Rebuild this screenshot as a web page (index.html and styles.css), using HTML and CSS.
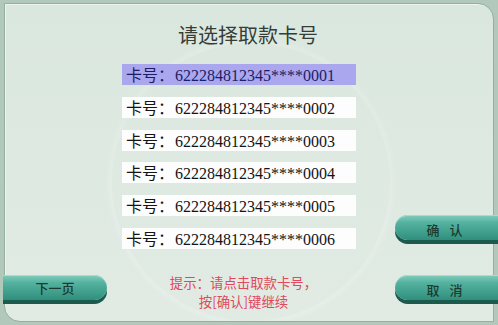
FILE: index.html
```
<!DOCTYPE html>
<html lang="zh-CN">
<head>
<meta charset="utf-8">
<title>请选择取款卡号</title>
<link rel="stylesheet" href="styles.css">
</head>
<body>
<div class="screen">
  <div class="panel">
    <h1 class="title">请选择取款卡号</h1>
    <ul class="cards">
      <li class="card selected"><span class="lbl">卡号：</span><span class="num">622284812345****0001</span></li>
      <li class="card"><span class="lbl">卡号：</span><span class="num">622284812345****0002</span></li>
      <li class="card"><span class="lbl">卡号：</span><span class="num">622284812345****0003</span></li>
      <li class="card"><span class="lbl">卡号：</span><span class="num">622284812345****0004</span></li>
      <li class="card"><span class="lbl">卡号：</span><span class="num">622284812345****0005</span></li>
      <li class="card"><span class="lbl">卡号：</span><span class="num">622284812345****0006</span></li>
    </ul>
    <div class="left-actions">
      <div class="btn btn-left"><span>下一页</span></div>
    </div>
    <p class="hint">提示：请点击取款卡号，<br>按[确认]键继续</p>
    <div class="right-actions">
      <div class="btn btn-right"><span>确</span><span>认</span></div>
      <div class="btn btn-right"><span>取</span><span>消</span></div>
    </div>
  </div>
</div>
</body>
</html>
```
FILE: styles.css
```
html, body {
  margin: 0;
  padding: 0;
}
body {
  width: 498px;
  height: 325px;
  overflow: hidden;
  background: #b2c8ba;
  font-family: "Liberation Serif", "Noto Sans CJK SC", serif;
}
.screen {
  width: 498px;
  height: 325px;
  padding-top: 3px;
  padding-left: 4px;
  box-sizing: border-box;
}
.panel {
  width: 490px;
  height: 319px;
  box-sizing: border-box;
  border: 1px solid #93b09f;
  border-radius: 0 16px 0 16px;
  background:
    radial-gradient(circle at 246px 178px, rgba(255,255,255,0) 138px, rgba(255,255,255,0.16) 140px, rgba(255,255,255,0) 146px),
    linear-gradient(#dae7de, #e1ebe4);
  box-shadow: inset 1px 1px 0 #eef5f0;
  display: grid;
  grid-template-columns: 117px 234px 1fr;
  grid-template-rows: auto auto 1fr;
}
.title {
  grid-column: 1 / 4;
  grid-row: 1;
  margin: 0;
  padding-top: 19px;
  text-align: center;
  font-family: "Noto Sans CJK SC", sans-serif;
  font-weight: 400;
  font-size: 20px;
  line-height: 24px;
  color: #353d38;
  padding-right: 2px;
}
.cards {
  grid-column: 2;
  grid-row: 2;
  list-style: none;
  margin: 17px 0 0 0;
  padding: 0;
  display: flex;
  flex-direction: column;
  gap: 11.8px;
}
.card {
  height: 21px;
  line-height: 21px;
  background: #fcfdfc;
  padding-left: 4px;
  font-size: 16px;
  color: #141414;
  white-space: nowrap;
}
.card .lbl {
  font-family: "Noto Sans CJK SC", sans-serif;
  font-size: 16px;
  margin-right: 1px;
}
.card .num {
  font-family: "Liberation Serif", serif;
}
.card.selected {
  background: #aaa7ef;
  color: #1d1d66;
}
.hint {
  grid-column: 2;
  grid-row: 3;
  margin: 24px 0 0 0;
  padding-left: 9px;
  text-align: center;
  font-family: "Noto Sans CJK SC", sans-serif;
  font-size: 13.4px;
  line-height: 19px;
  color: #e0485c;
  white-space: nowrap;
}
.left-actions {
  grid-column: 1;
  grid-row: 3;
  align-self: end;
  margin-left: -2px;
  margin-bottom: 21px;
}
.right-actions {
  grid-column: 3;
  grid-row: 2 / 4;
  align-self: end;
  justify-self: end;
  margin-right: -5px;
  margin-bottom: 21px;
  display: flex;
  flex-direction: column;
  gap: 35px;
}
.btn {
  height: 25px;
  display: flex;
  align-items: center;
  justify-content: center;
  gap: 10px;
  background: linear-gradient(#84cdbd 0%, #55b29f 30%, #3e9f8b 70%, #308f7c 100%);
  box-shadow: 0 4px 0 #1b5a4c, inset 0 1px 0 #a6ddd0;
  font-family: "Noto Sans CJK SC", sans-serif;
  font-weight: 500;
  font-size: 13px;
  color: #1c3a30;
}
.btn-left {
  width: 104px;
  border-radius: 0 13px 13px 0;
  gap: 0;
  box-sizing: border-box;
}
.btn-right {
  width: 103px;
  border-radius: 13px 0 0 13px;
  padding-right: 4px;
  padding-top: 3px;
  box-sizing: border-box;
}
```
